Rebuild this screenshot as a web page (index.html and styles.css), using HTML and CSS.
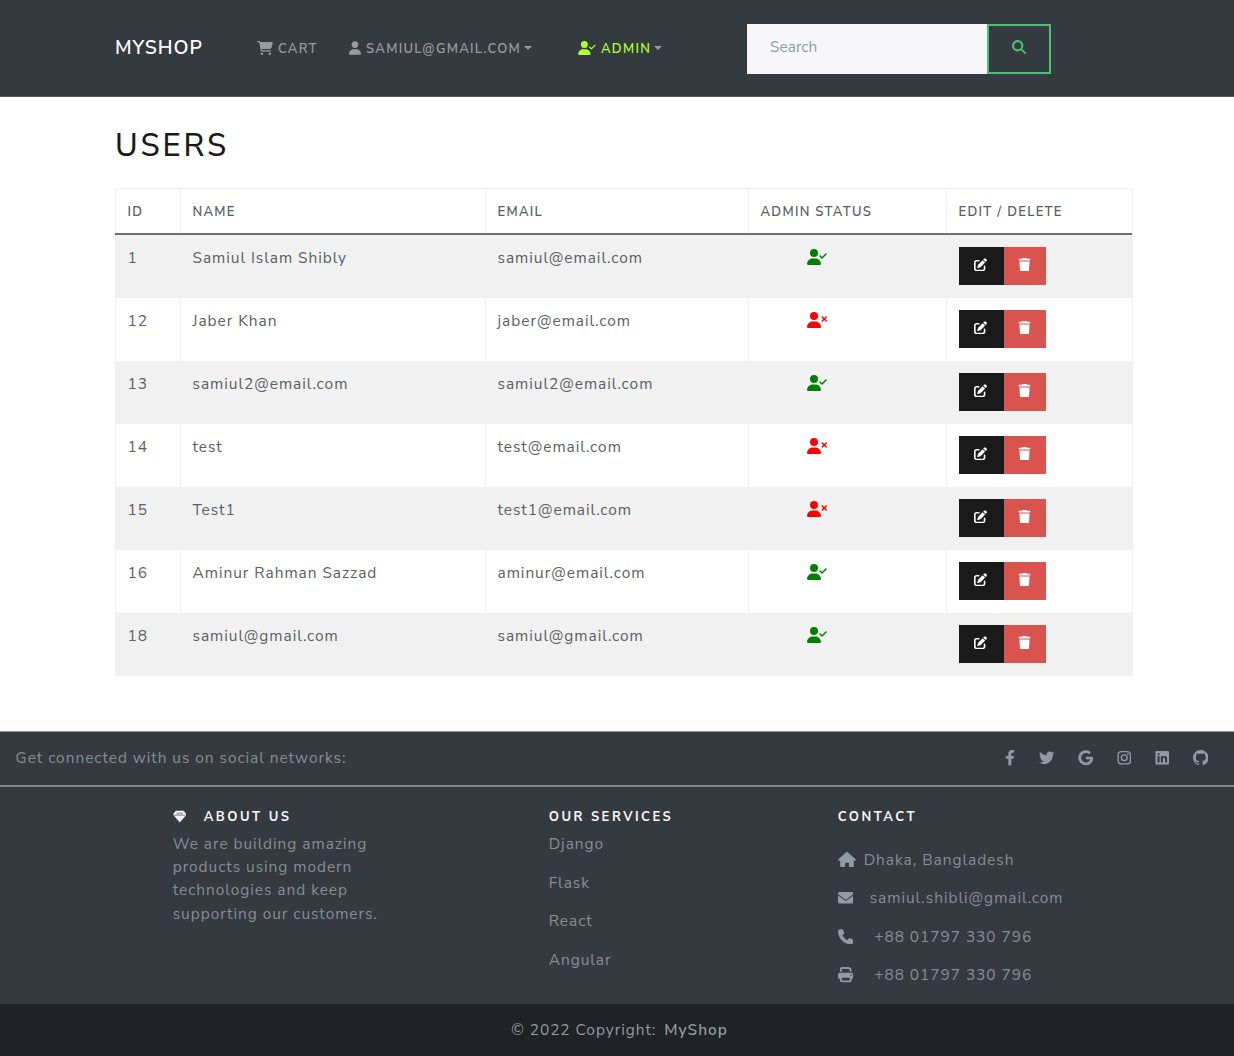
FILE: index.html
```html
<!DOCTYPE html>
<html lang="en">
<head>
<meta charset="utf-8">
<title>MyShop</title>
<link rel="stylesheet" href="styles.css">
</head>
<body>
<svg class="sprite" aria-hidden="true">
  <symbol id="user" viewBox="0 0 448 512"><path d="M224 256c70.7 0 128-57.3 128-128S294.7 0 224 0S96 57.3 96 128s57.3 128 128 128zm-45.7 48C79.8 304 0 383.8 0 482.3C0 498.7 13.3 512 29.7 512H418.3c16.4 0 29.7-13.3 29.7-29.7C448 383.8 368.2 304 269.7 304H178.3z"/></symbol>
  <symbol id="user-check" viewBox="0 0 640 512"><path d="M96 128a128 128 0 1 1 256 0A128 128 0 1 1 96 128zM0 482.3C0 383.8 79.8 304 178.3 304h91.4C368.2 304 448 383.8 448 482.3c0 16.4-13.3 29.7-29.7 29.7H29.7C13.3 512 0 498.7 0 482.3zM625 177L497 305c-9.4 9.4-24.6 9.4-33.9 0l-64-64c-9.4-9.4-9.4-24.6 0-33.9s24.6-9.4 33.9 0l47 47L591 143c9.4-9.4 24.6-9.4 33.9 0s9.4 24.6 0 33.9z"/></symbol>
  <symbol id="user-xmark" viewBox="0 0 640 512"><path d="M96 128a128 128 0 1 1 256 0A128 128 0 1 1 96 128zM0 482.3C0 383.8 79.8 304 178.3 304h91.4C368.2 304 448 383.8 448 482.3c0 16.4-13.3 29.7-29.7 29.7H29.7C13.3 512 0 498.7 0 482.3zM471 143c9.4-9.4 24.6-9.4 33.9 0l47 47 47-47c9.4-9.4 24.6-9.4 33.9 0s9.4 24.6 0 33.9l-47 47 47 47c9.4 9.4 9.4 24.6 0 33.9s-24.6 9.4-33.9 0l-47-47-47 47c-9.4 9.4-24.6 9.4-33.9 0s-9.4-24.6 0-33.9l47-47-47-47c-9.4-9.4-9.4-24.6 0-33.9z"/></symbol>
  <symbol id="cart" viewBox="0 0 576 512"><path d="M0 24C0 10.7 10.7 0 24 0H69.5c22 0 41.5 12.8 50.6 32h411c26.3 0 45.5 25 38.6 50.4l-41 152.3c-8.5 31.4-37 53.3-69.5 53.3H170.7l5.4 28.5c2.2 11.3 12.1 19.5 23.6 19.5H488c13.3 0 24 10.7 24 24s-10.7 24-24 24H199.7c-34.6 0-64.3-24.6-70.7-58.5L77.4 54.5c-.7-3.8-4-6.5-7.9-6.5H24C10.7 48 0 37.3 0 24zM128 464a48 48 0 1 1 96 0 48 48 0 1 1 -96 0zm336-48a48 48 0 1 1 0 96 48 48 0 1 1 0-96z"/></symbol>
  <symbol id="search" viewBox="0 0 512 512"><path d="M416 208c0 45.9-14.9 88.3-40 122.7L502.6 457.4c12.5 12.5 12.5 32.8 0 45.3s-32.8 12.5-45.3 0L330.7 376c-34.4 25.2-76.8 40-122.7 40C93.1 416 0 322.9 0 208S93.1 0 208 0S416 93.1 416 208zM208 336a128 128 0 1 0 0-256 128 128 0 1 0 0 256z"/></symbol>
  <symbol id="edit" viewBox="0 0 512 512"><path d="M471.6 21.7c-21.9-21.9-57.3-21.9-79.2 0L362.3 51.7l97.9 97.9 30.1-30.1c21.9-21.9 21.9-57.3 0-79.2L471.6 21.7zm-299.2 220c-6.1 6.1-10.8 13.6-13.5 21.9l-29.6 88.8c-2.9 8.6-.6 18.1 5.8 24.6s15.9 8.7 24.6 5.8l88.8-29.6c8.2-2.7 15.7-7.4 21.9-13.5L437.7 172.3 339.7 74.3 172.4 241.7zM96 64C43 64 0 107 0 160V416c0 53 43 96 96 96H352c53 0 96-43 96-96V320c0-17.7-14.3-32-32-32s-32 14.3-32 32v96c0 17.7-14.3 32-32 32H96c-17.7 0-32-14.3-32-32V160c0-17.7 14.3-32 32-32h96c17.7 0 32-14.3 32-32s-14.3-32-32-32H96z"/></symbol>
  <symbol id="trash" viewBox="0 0 448 512"><path d="M135.2 17.7L128 32H32C14.3 32 0 46.3 0 64S14.3 96 32 96H416c17.7 0 32-14.3 32-32s-14.3-32-32-32H320l-7.2-14.3C307.4 6.8 296.3 0 284.2 0H163.8c-12.1 0-23.2 6.8-28.6 17.7zM416 128H32L53.2 467c1.6 25.3 22.6 45 47.9 45H346.9c25.3 0 46.3-19.7 47.9-45L416 128z"/></symbol>
  <symbol id="facebook" viewBox="0 0 320 512"><path d="M279.14 288l14.22-92.66h-88.91v-60.13c0-25.35 12.42-50.06 52.24-50.06h40.42V6.26S260.43 0 225.36 0c-73.22 0-121.08 44.38-121.08 124.72v70.62H22.89V288h81.39v224h100.17V288z"/></symbol>
  <symbol id="twitter" viewBox="0 0 512 512"><path d="M459.37 151.716c.325 4.548.325 9.097.325 13.645 0 138.72-105.583 298.558-298.558 298.558-59.452 0-114.68-17.219-161.137-47.106 8.447.974 16.568 1.299 25.34 1.299 49.055 0 94.213-16.568 130.274-44.832-46.132-.975-84.792-31.188-98.112-72.772 6.498.974 12.995 1.624 19.818 1.624 9.421 0 18.843-1.3 27.614-3.573-48.081-9.747-84.143-51.98-84.143-102.985v-1.299c13.969 7.797 30.214 12.67 47.431 13.319-28.264-18.843-46.781-51.005-46.781-87.391 0-19.492 5.197-37.36 14.294-52.954 51.655 63.675 129.3 105.258 216.365 109.807-1.624-7.797-2.599-15.918-2.599-24.04 0-57.828 46.782-104.934 104.934-104.934 30.213 0 57.502 12.67 76.67 33.137 23.715-4.548 46.456-13.32 66.599-25.34-7.798 24.366-24.366 44.833-46.132 57.827 21.117-2.273 41.584-8.122 60.426-16.243-14.292 20.791-32.161 39.308-52.628 54.253z"/></symbol>
  <symbol id="google" viewBox="0 0 488 512"><path d="M488 261.8C488 403.3 391.1 504 248 504 110.8 504 0 393.2 0 256S110.8 8 248 8c66.8 0 123 24.5 166.3 64.9l-67.5 64.9C258.5 52.6 94.3 116.6 94.3 256c0 86.5 69.1 156.6 153.7 156.6 98.2 0 135-70.4 140.8-106.9H248v-85.3h236.1c2.3 12.7 3.9 24.9 3.9 41.4z"/></symbol>
  <symbol id="instagram" viewBox="0 0 448 512"><rect x="20" y="52" width="408" height="408" rx="112" fill="none" stroke="currentColor" stroke-width="44"/><circle cx="224" cy="256" r="95" fill="none" stroke="currentColor" stroke-width="44"/><circle cx="343.600" cy="136.400" r="26.800"/></symbol>
  <symbol id="linkedin" viewBox="0 0 448 512"><path d="M416 32H31.9C14.3 32 0 46.5 0 64.3v383.4C0 465.5 14.3 480 31.9 480H416c17.6 0 32-14.5 32-32.3V64.3c0-17.8-14.4-32.3-32-32.3zM135.4 416H69V202.2h66.5V416zm-33.2-243c-21.3 0-38.5-17.3-38.5-38.5S80.900 96 102.200 96c21.200 0 38.500 17.300 38.500 38.500 0 21.300-17.200 38.500-38.500 38.500zm282.100 243h-66.400V312c0-24.800-.500-56.700-34.500-56.700-34.600 0-39.900 27-39.900 54.900V416h-66.400V202.200h63.700v29.200h.900c8.900-16.800 30.600-34.500 62.900-34.500 67.200 0 79.700 44.300 79.700 101.900V416z"/></symbol>
  <symbol id="github" viewBox="0 0 16 16"><path d="M8 0C3.58 0 0 3.58 0 8c0 3.54 2.29 6.53 5.47 7.59.4.07.55-.17.55-.38 0-.19-.01-.82-.01-1.49-2.01.37-2.53-.49-2.69-.94-.09-.23-.48-.94-.82-1.13-.28-.15-.68-.52-.01-.53.63-.01 1.08.58 1.23.82.72 1.21 1.87.87 2.33.66.07-.52.28-.87.51-1.07-1.78-.2-3.64-.89-3.64-3.95 0-.87.31-1.59.82-2.15-.08-.2-.36-1.02.08-2.12 0 0 .67-.21 2.2.82.64-.18 1.32-.27 2-.27s1.36.09 2 .27c1.53-1.04 2.2-.82 2.2-.82.44 1.1.16 1.92.08 2.12.51.56.82 1.27.82 2.15 0 3.07-1.87 3.75-3.65 3.95.29.25.54.73.54 1.48 0 1.07-.01 1.93-.01 2.2 0 .21.15.46.55.38A8.01 8.01 0 0 0 16 8c0-4.42-3.58-8-8-8z"/></symbol>
  <symbol id="gem" viewBox="0 0 14 14"><path d="M3 .8h8l2.600 3.200v1.200L7 13 .4 5.200V4z"/><path d="M.8 5.300h12.400M4 2.600 5.300 4.300 7 2.600l1.700 1.700L10 2.600" fill="none" stroke="#343a40" stroke-width=".7"/></symbol>
  <symbol id="home" viewBox="0 0 576 512"><path d="M575.8 255.5c0 18-15 32.1-32 32.1h-32l.7 160.2c0 2.7-.2 5.4-.5 8.1V472c0 22.1-17.9 40-40 40H392c-22.1 0-40-17.9-40-40V384c0-17.7-14.3-32-32-32H256c-17.700 0-32 14.300-32 32v88c0 22.100-17.900 40-40 40H104c-22.100 0-40-17.900-40-40V287.600H32c-18 0-32-14-32-32.100c0-9 3-17 10-24L266.400 8c7-7 15-8 22-8s15 2 21 7L564.800 231.500c8 7 12 15 11 24z"/></symbol>
  <symbol id="envelope" viewBox="0 0 512 512"><path d="M48 64C21.5 64 0 85.5 0 112c0 15.1 7.1 29.3 19.2 38.4L236.8 313.6c11.4 8.5 27 8.5 38.4 0L492.8 150.4c12.1-9.1 19.2-23.3 19.2-38.4c0-26.5-21.5-48-48-48H48zM0 176V384c0 35.3 28.7 64 64 64H448c35.3 0 64-28.7 64-64V176L294.4 339.2c-22.8 17.1-54 17.1-76.8 0L0 176z"/></symbol>
  <symbol id="phone" viewBox="0 0 512 512"><path d="M164.9 24.6c-7.7-18.6-28-28.5-47.4-23.2l-88 24C12.1 30.2 0 46 0 64C0 311.4 200.6 512 448 512c18 0 33.8-12.1 38.6-29.5l24-88c5.3-19.4-4.6-39.7-23.2-47.4l-96-40c-16.3-6.8-35.2-2.1-46.3 11.6L304.7 368C234.3 334.7 177.3 277.7 144 207.3L193.3 167c13.7-11.2 18.4-30 11.6-46.3l-40-96z"/></symbol>
  <symbol id="print" viewBox="0 0 512 512"><path d="M128 0C92.7 0 64 28.7 64 64v96h64V64H354.7L384 93.3V160h64V93.3c0-17-6.7-33.3-18.7-45.3L400 18.7C388 6.7 371.7 0 354.7 0H128zM384 352v96H128V352H384zm64 32h32c17.7 0 32-14.3 32-32V256c0-35.3-28.7-64-64-64H64c-35.300 0-64 28.700-64 64v96c0 17.700 14.300 32 32 32H64v64c0 35.300 28.700 64 64 64H384c35.300 0 64-28.700 64-64V384zM432 248a24 24 0 1 1 0 48 24 24 0 1 1 0-48z"/></symbol>
</svg>

<header class="navbar">
  <a class="brand">MYSHOP</a>
  <nav class="nav">
    <a class="nav-link nav-cart"><svg class="icon cart"><use href="#cart"/></svg><span>CART</span></a>
    <a class="nav-link nav-account"><svg class="icon user"><use href="#user"/></svg><span>SAMIUL@GMAIL.COM</span><i class="caret"></i></a>
    <a class="nav-link nav-admin"><svg class="icon wide"><use href="#user-check"/></svg><span>ADMIN</span><i class="caret"></i></a>
  </nav>
  <form class="search">
    <input class="search-input" type="text" placeholder="Search">
    <button class="search-btn" type="button" aria-label="Search"><svg class="icon"><use href="#search"/></svg></button>
  </form>
</header>

<main class="content">
  <h1 class="title">USERS</h1>
  <table class="users">
    <colgroup><col class="c-id"><col class="c-name"><col class="c-email"><col class="c-status"><col class="c-actions"></colgroup>
    <thead><tr><th>ID</th><th>NAME</th><th>EMAIL</th><th>ADMIN STATUS</th><th>EDIT / DELETE</th></tr></thead>
    <tbody>
      <tr><td>1</td><td>Samiul Islam Shibly</td><td>samiul@email.com</td><td class="status yes"><svg class="icon wide"><use href="#user-check"/></svg></td><td><div class="actions"><button class="edit"><svg class="icon"><use href="#edit"/></svg></button><button class="delete"><svg class="icon"><use href="#trash"/></svg></button></div></td></tr>
      <tr><td>12</td><td>Jaber Khan</td><td>jaber@email.com</td><td class="status no"><svg class="icon wide"><use href="#user-xmark"/></svg></td><td><div class="actions"><button class="edit"><svg class="icon"><use href="#edit"/></svg></button><button class="delete"><svg class="icon"><use href="#trash"/></svg></button></div></td></tr>
      <tr><td>13</td><td>samiul2@email.com</td><td>samiul2@email.com</td><td class="status yes"><svg class="icon wide"><use href="#user-check"/></svg></td><td><div class="actions"><button class="edit"><svg class="icon"><use href="#edit"/></svg></button><button class="delete"><svg class="icon"><use href="#trash"/></svg></button></div></td></tr>
      <tr><td>14</td><td>test</td><td>test@email.com</td><td class="status no"><svg class="icon wide"><use href="#user-xmark"/></svg></td><td><div class="actions"><button class="edit"><svg class="icon"><use href="#edit"/></svg></button><button class="delete"><svg class="icon"><use href="#trash"/></svg></button></div></td></tr>
      <tr><td>15</td><td>Test1</td><td>test1@email.com</td><td class="status no"><svg class="icon wide"><use href="#user-xmark"/></svg></td><td><div class="actions"><button class="edit"><svg class="icon"><use href="#edit"/></svg></button><button class="delete"><svg class="icon"><use href="#trash"/></svg></button></div></td></tr>
      <tr><td>16</td><td>Aminur Rahman Sazzad</td><td>aminur@email.com</td><td class="status yes"><svg class="icon wide"><use href="#user-check"/></svg></td><td><div class="actions"><button class="edit"><svg class="icon"><use href="#edit"/></svg></button><button class="delete"><svg class="icon"><use href="#trash"/></svg></button></div></td></tr>
      <tr><td>18</td><td>samiul@gmail.com</td><td>samiul@gmail.com</td><td class="status yes"><svg class="icon wide"><use href="#user-check"/></svg></td><td><div class="actions"><button class="edit"><svg class="icon"><use href="#edit"/></svg></button><button class="delete"><svg class="icon"><use href="#trash"/></svg></button></div></td></tr>
    </tbody>
  </table>
</main>

<footer class="footer">
  <section class="social">
    <span>Get connected with us on social networks:</span>
    <div class="social-links">
      <svg class="icon fb"><use href="#facebook"/></svg>
      <svg class="icon"><use href="#twitter"/></svg>
      <svg class="icon"><use href="#google"/></svg>
      <svg class="icon narrow"><use href="#instagram"/></svg>
      <svg class="icon narrow"><use href="#linkedin"/></svg>
      <svg class="icon"><use href="#github"/></svg>
    </div>
  </section>
  <section class="columns">
    <div class="about">
      <h6><svg class="icon gem"><use href="#gem"/></svg>ABOUT US</h6>
      <p>We are building amazing<br>products using modern<br>technologies and keep<br>supporting our customers.</p>
    </div>
    <div class="services">
      <h6>OUR SERVICES</h6>
      <ul><li>Django</li><li>Flask</li><li>React</li><li>Angular</li></ul>
    </div>
    <div class="contact">
      <h6>CONTACT</h6>
      <ul>
        <li class="address"><svg class="icon home"><use href="#home"/></svg>Dhaka, Bangladesh</li>
        <li class="mail"><svg class="icon"><use href="#envelope"/></svg>samiul.shibli@gmail.com</li>
        <li class="tel"><svg class="icon"><use href="#phone"/></svg>+88 01797 330 796</li>
        <li class="tel"><svg class="icon"><use href="#print"/></svg>+88 01797 330 796</li>
      </ul>
    </div>
  </section>
  <div class="copyright"><span>© 2022 Copyright:</span><b>MyShop</b></div>
</footer>
</body>
</html>
```
FILE: styles.css
```css
* { box-sizing: border-box; }
body {
  margin: 0;
  background: #fff;
  color: #5a5e61;
  font-family: "Nunito Sans", Lato, "Open Sans", sans-serif;
  font-size: 15.450px;
  line-height: 23.200px;
  letter-spacing: .966px;
}
.sprite { position: absolute; width: 0; height: 0; }
.icon { display: block; flex: none; width: 15.500px; height: 15.500px; fill: currentColor; }
button { border: 0; padding: 0; border-radius: 0; }
h1, h6, p, ul { margin: 0; padding: 0; font-weight: 400; }
ul { list-style: none; }

.navbar {
  display: flex;
  align-items: center;
  height: 97px;
  padding: 0 115px;
  background: #343a40;
  border-bottom: 1px solid #54585d;
}
.brand { width: 142px; color: #fff; font-size: 19.300px; font-weight: 600; letter-spacing: .966px; }
.nav { display: flex; width: 490px; color: #999c9f; font-size: 13px; font-weight: 600; letter-spacing: 1.300px; }
.nav-link { display: flex; align-items: center; }
.nav-link span { padding-top: 3px; }
.nav-link .icon { height: 14px; margin-right: 4px; }
.nav-link .cart { width: 16px; margin-right: 5px; }
.nav-link .user { width: 12px; margin-right: 5px; }
.nav-link .wide { width: 18px; margin-right: 5px; }
.nav-cart { width: 92px; }
.nav-account { width: 229px; }
.nav-admin { color: #adff2f; }
.caret { border: 4px solid transparent; border-top-color: #999c9f; border-bottom: 0; margin-left: 2.500px; }
.search { display: flex; width: 304px; height: 50px; margin-top: 1px; }
.search-input {
  width: 240px;
  border: 0;
  padding: 0 23px 3px;
  background: #f7f7f9;
  font: inherit;
  letter-spacing: 0;
}
.search-input::placeholder { color: #919aa1; opacity: 1; }
.search-btn {
  display: grid;
  place-items: center;
  width: 64px;
  padding-bottom: 4px;
  background: transparent;
  border: 2px solid #4bbf73;
  color: #4bbf73;
}
.search-btn .icon { width: 14px; height: 14px; }

.content { height: 634px; padding: 30px 101px 0 115px; }
.title { height: 61px; color: #1a1a1a; font-size: 31px; font-weight: 500; line-height: 38px; letter-spacing: 2.800px; }
.users { table-layout: fixed; width: 1018px; border-spacing: 0; border-right: 1px solid #f0f0f0; }
.c-id { width: 65px; }
.c-name { width: 305px; }
.c-email { width: 263px; }
.c-status { width: 198px; }
.users th {
  height: 47px;
  padding: 3px 12px 0 12.500px;
  border-top: 1px solid #f0f0f0;
  border-bottom: 2px solid #6d6f71;
  box-shadow: inset 1px 0 #f0f0f0;
  font-size: 13px;
  font-weight: 600;
  letter-spacing: 1.300px;
  text-align: left;
}
.users td { height: 63px; padding: 11px 12px 0 11.500px; border-left: 1px solid #f0f0f0; vertical-align: top; }
.users tbody tr:nth-child(odd) { background: #f1f1f1; }
.users .status { padding: 14px 0 0 58px; }
.status .icon { width: 20px; height: 16px; }
.yes { color: green; }
.no { color: red; }
.actions { display: flex; height: 38px; margin-top: 1px; color: #fff; }
.actions button { display: grid; place-items: center; color: inherit; padding-bottom: 3px; }
.actions .edit { width: 45px; background: #1a1a1a; padding-right: 2px; }
.actions .delete { width: 42px; background: #d9534f; padding-right: 1px; }
.actions .icon { width: 13px; height: 13.500px; }

.footer { background: #343a40; color: #919aa1; }
.social {
  display: flex;
  align-items: center;
  justify-content: space-between;
  height: 56px;
  padding: 0 26px 1px 15.500px;
  border-top: 1px solid #919aa1;
  border-bottom: 2px solid #7d858b;
}
.social span { padding-bottom: 1px; }
.social span, .about p, .services ul, .contact ul { color: #868e95; }
.social-links { display: flex; align-items: center; gap: 23.500px; }
.social-links .fb { width: 10px; }
.social-links .narrow { width: 14.500px; }
.columns { display: grid; grid-template-columns: 376px 289px 1fr; height: 217px; padding: 18px 0 0 172.700px; }
.columns h6 { display: flex; align-items: center; height: 27px; padding-bottom: 1px; color: #f7f7f9; font-size: 13px; font-weight: 700; letter-spacing: 2.500px; }
.columns .gem { width: 13.500px; height: 13.500px; margin: 0 17.500px 2px 0; }
.services li, .contact li { height: 38.600px; }
.contact ul { margin-top: 15.500px; }
.contact li { display: flex; }
.contact .icon { margin-top: 4px; color: #919aa1; }
.contact .home { width: 18px; }
.address { gap: 8px; }
.mail { gap: 16.500px; }
.tel { gap: 21px; }
.copyright { display: flex; justify-content: center; align-items: center; gap: 8px; height: 52px; background: #1f2226; padding: 0 0 0 5px; }
.copyright b { font-weight: 600; }
```
